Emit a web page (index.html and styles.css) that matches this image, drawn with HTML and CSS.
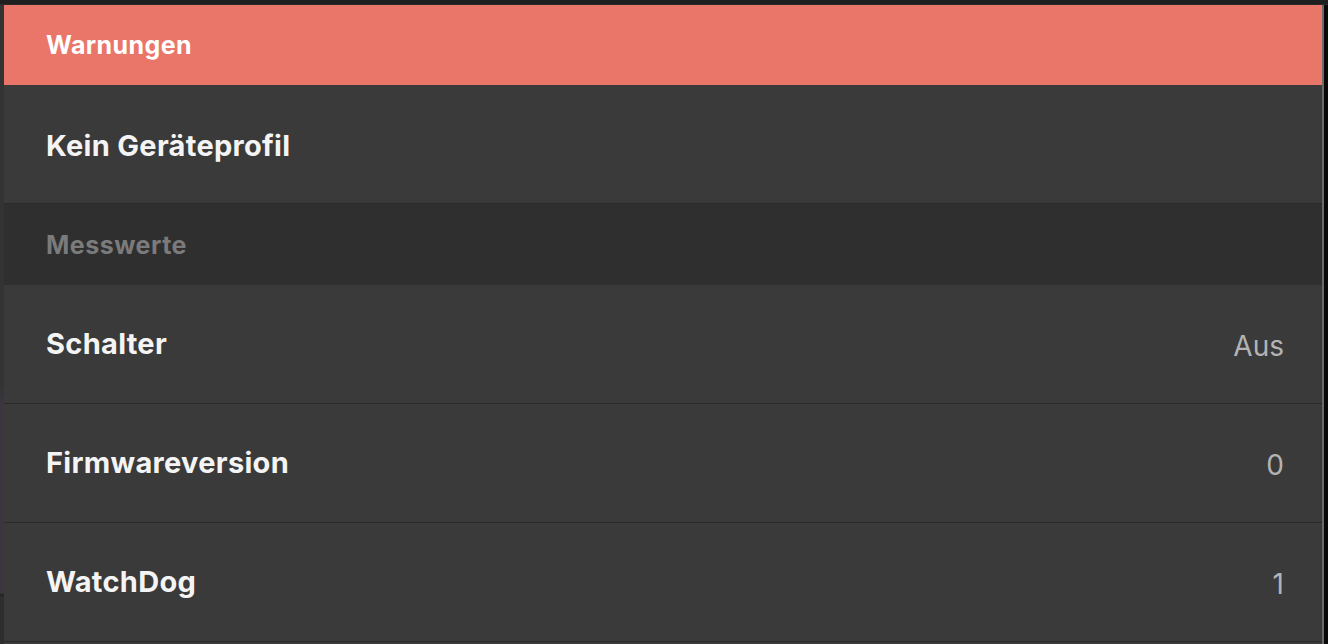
FILE: index.html
```html
<!DOCTYPE html>
<html lang="de">
<head>
<meta charset="utf-8">
<title>Warnungen</title>
<link rel="stylesheet" href="styles.css">
</head>
<body>
<div class="topbar"></div>
<div class="frame">
  <div class="left-strip"></div>
  <main class="panel">
    <div class="header">Warnungen</div>
    <div class="row row-first"><span class="label">Kein Geräteprofil</span></div>
    <div class="section">Messwerte</div>
    <div class="row"><span class="label">Schalter</span><span class="value">Aus</span></div>
    <div class="row"><span class="label">Firmwareversion</span><span class="value">0</span></div>
    <div class="row"><span class="label">WatchDog</span><span class="value">1</span></div>
  </main>
  <div class="right-edge"></div>
</div>
</body>
</html>
```

FILE: styles.css
```css
html, body {
  margin: 0;
  padding: 0;
  height: 100%;
  overflow: hidden;
  background: #1c1c1c;
  font-family: Inter, "Liberation Sans", sans-serif;
}
body {
  display: flex;
  flex-direction: column;
}
.topbar {
  height: 5px;
  flex: none;
  background: #1f1f1f;
  border-bottom: 1px solid #2b2b2b;
  box-sizing: border-box;
}
.frame {
  flex: 1;
  display: flex;
  min-height: 0;
}
.left-strip {
  width: 4px;
  flex: none;
  background: linear-gradient(#333 0, #333 380px, #3b3540 400px, #3b3540 588px, #222 590px, #2e2e2e 592px);
}
.right-edge {
  width: 6px;
  flex: none;
  border-left: 2px solid #6a6a6a;
  background: #0c0a08;
  box-sizing: border-box;
}
.panel {
  flex: 1;
  display: flex;
  flex-direction: column;
  background: #3a3a3a;
}
.header {
  height: 80px;
  flex: none;
  display: flex;
  align-items: center;
  padding-left: 42px;
  background: #ea7669;
  color: #fff;
  font-size: 25px;
  font-weight: 700;
  letter-spacing: 0.4px;
}
.row {
  height: 119px;
  flex: none;
  box-sizing: border-box;
  display: flex;
  align-items: center;
  justify-content: space-between;
  padding: 0 38px 0 42px;
  border-bottom: 1px solid #2a2a2a;
  background: #3a3a3a;
}
.row-first .label {
  margin-top: 3px;
}
.label {
  color: #f4f4f4;
  font-size: 29px;
  font-weight: 700;
  letter-spacing: 0.3px;
  margin-top: -2px;
}
.value {
  color: #b3b3b3;
  font-size: 28px;
  font-weight: 400;
  margin-top: 4px;
}
.section {
  height: 81px;
  flex: none;
  display: flex;
  align-items: center;
  padding-left: 42px;
  background: #2f2f2f;
  color: #7b7b7b;
  font-size: 25px;
  font-weight: 700;
  letter-spacing: 0.5px;
}
```
